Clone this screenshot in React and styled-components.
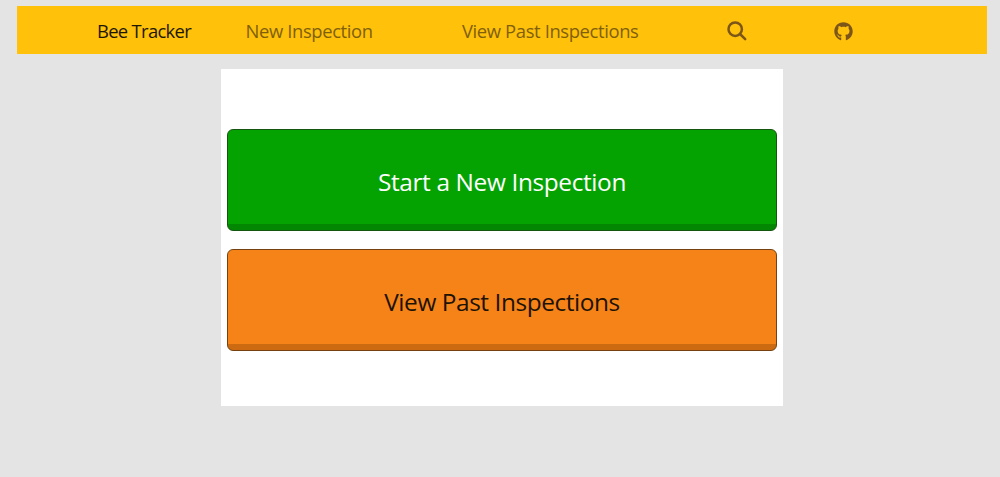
import React from "react";
import styled, { createGlobalStyle } from "styled-components";
import { FaGithub } from "react-icons/fa";

const GlobalStyle = createGlobalStyle`
  *, *::before, *::after { box-sizing: border-box; }
  body {
    margin: 0;
    background: #e4e4e4;
    font-family: "Open Sans", "Noto Sans", sans-serif;
    font-weight: 400;
  }
`;

const Page = styled.div`
  min-height: 477px;
  padding: 6px 13px 0 17px;
  display: flex;
  flex-direction: column;
  align-items: center;
`;

const Navbar = styled.nav`
  width: 100%;
  height: 48px;
  padding: 2px 80px 0;
  display: flex;
  align-items: center;
  background: #ffc10a;
`;

const NavLink = styled.a`
  display: flex;
  flex: 0 0 ${(p) => p.$width}px;
  font-size: 18.4px;
  line-height: 28px;
  letter-spacing: ${(p) => p.$tracking || 0}px;
  white-space: nowrap;
  color: ${(p) => (p.$brand ? "#1d1703" : "#805f0c")};
  text-decoration: none;
`;

const IconLink = styled.a`
  display: flex;
  flex: 0 0 ${(p) => p.$width}px;
  color: #7c5618;
`;

const Panel = styled.main`
  width: 562px;
  height: 337px;
  margin: 15px 0 0;
  padding: 60px 6px 0;
  display: flex;
  flex-direction: column;
  gap: 18px;
  background: #fff;
`;

const ActionButton = styled.button`
  height: 102px;
  padding: 3px 0 0;
  border: 1px solid ${(p) => p.$border};
  border-radius: 6px;
  background: linear-gradient(to top, ${(p) => p.$edge} 6px, ${(p) => p.$fill} 6px);
  color: ${(p) => p.$color};
  font-family: inherit;
  font-weight: inherit;
  font-size: 24.4px;
  line-height: 34px;
  letter-spacing: ${(p) => p.$tracking || 0}px;
`;

const SearchIcon = () => (
  <svg width="20" height="20" viewBox="0 0 20 20" fill="none" stroke="currentColor" strokeWidth="2.5">
    <circle cx="8.2" cy="8.2" r="6.7" />
    <path d="M13 13l5.2 5.2" strokeLinecap="round" />
  </svg>
);

export default function App() {
  return (
    <>
      <GlobalStyle />
      <Page>
        <Navbar>
          <NavLink $brand $width={148.5} $tracking={-0.68}>Bee Tracker</NavLink>
          <NavLink $width={216.5} $tracking={-0.37}>New Inspection</NavLink>
          <NavLink $width={265} $tracking={-0.37}>View Past Inspections</NavLink>
          <IconLink $width={107} aria-label="Search">
            <SearchIcon />
          </IconLink>
          <IconLink $width={20} aria-label="GitHub">
            <FaGithub size={19} />
          </IconLink>
        </Navbar>
        <Panel>
          <ActionButton $fill="#04a302" $edge="#038602" $border="#14560f" $color="#fff" $tracking={-0.36}>
            Start a New Inspection
          </ActionButton>
          <ActionButton $fill="#f68318" $edge="#cb6a11" $border="#75420f" $color="#1c1206" $tracking={-0.42}>
            View Past Inspections
          </ActionButton>
        </Panel>
      </Page>
    </>
  );
}
